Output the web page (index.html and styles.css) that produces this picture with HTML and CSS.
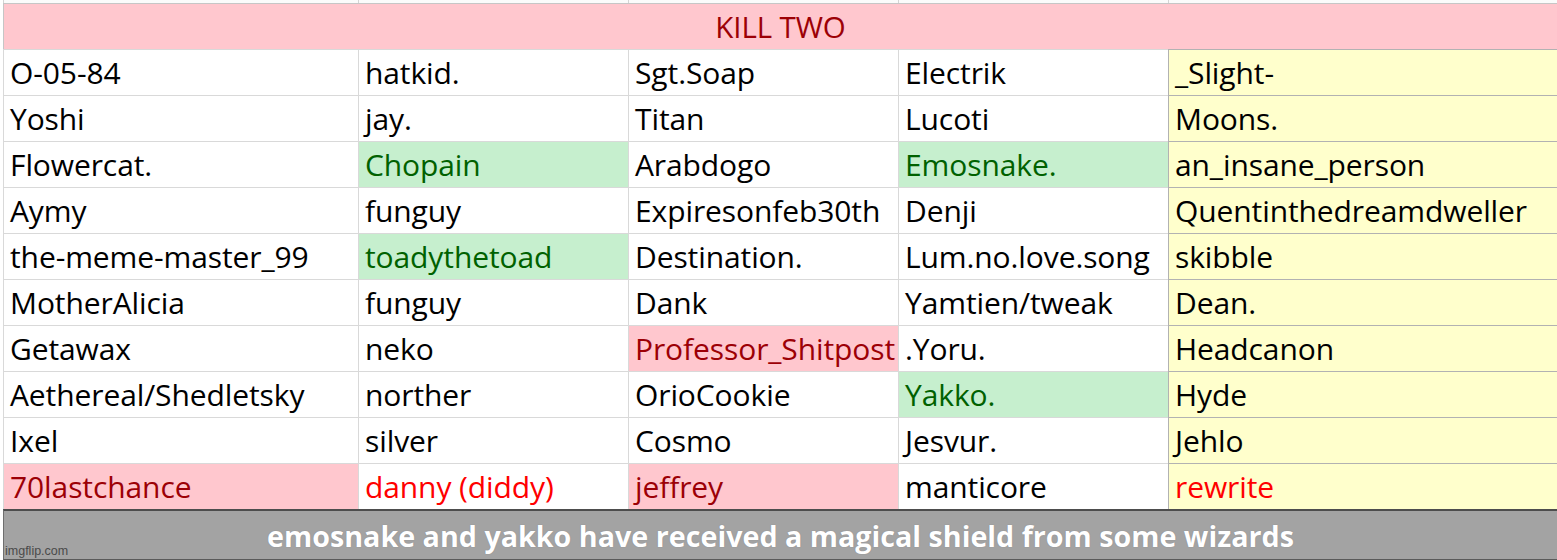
FILE: index.html
```html
<!DOCTYPE html>
<html>
<head>
<meta charset="utf-8">
<link rel="stylesheet" href="styles.css">
</head>
<body>
<div class="sheet">
  <div class="grid">
    <div class="strip"></div><div class="strip"></div><div class="strip"></div><div class="strip"></div><div class="strip"></div>
    <div class="cell head">KILL TWO</div>

    <div class="cell">O-05-84</div><div class="cell">hatkid.</div><div class="cell">Sgt.Soap</div><div class="cell">Electrik</div><div class="cell note">_Slight-</div>
    <div class="cell">Yoshi</div><div class="cell">jay.</div><div class="cell">Titan</div><div class="cell">Lucoti</div><div class="cell note">Moons.</div>
    <div class="cell">Flowercat.</div><div class="cell good">Chopain</div><div class="cell">Arabdogo</div><div class="cell good">Emosnake.</div><div class="cell note">an_insane_person</div>
    <div class="cell">Aymy</div><div class="cell">funguy</div><div class="cell">Expiresonfeb30th</div><div class="cell">Denji</div><div class="cell note">Quentinthedreamdweller</div>
    <div class="cell">the-meme-master_99</div><div class="cell good">toadythetoad</div><div class="cell">Destination.</div><div class="cell">Lum.no.love.song</div><div class="cell note">skibble</div>
    <div class="cell">MotherAlicia</div><div class="cell">funguy</div><div class="cell">Dank</div><div class="cell">Yamtien/tweak</div><div class="cell note">Dean.</div>
    <div class="cell">Getawax</div><div class="cell">neko</div><div class="cell bad">Professor_Shitpost</div><div class="cell">.Yoru.</div><div class="cell note">Headcanon</div>
    <div class="cell">Aethereal/Shedletsky</div><div class="cell">norther</div><div class="cell">OrioCookie</div><div class="cell good">Yakko.</div><div class="cell note">Hyde</div>
    <div class="cell">Ixel</div><div class="cell">silver</div><div class="cell">Cosmo</div><div class="cell">Jesvur.</div><div class="cell note">Jehlo</div>
    <div class="cell bad">70lastchance</div><div class="cell red">danny (diddy)</div><div class="cell bad">jeffrey</div><div class="cell">manticore</div><div class="cell note red">rewrite</div>
  </div>
  <div class="caption">
    <span class="caption-text">emosnake and yakko have received a magical shield from some wizards</span>
    <span class="wm">imgflip.com</span>
  </div>
</div>
</body>
</html>
```
FILE: styles.css
```css
html, body {
  margin: 0;
  padding: 0;
  background: #ffffff;
}
body {
  font-family: "Open Sans", "Noto Sans", sans-serif;
  width: 1557px;
  height: 560px;
  overflow: hidden;
}
.sheet {
  padding-left: 3px;
  width: 1554px;
}
.grid {
  display: grid;
  grid-template-columns: 355px 270px 270px 270px 389px;
  grid-template-rows: 3px;
  grid-auto-rows: 46px;
}
.strip {
  border-left: 1px solid #d4d4d4;
  background: #fbfbfb;
}
.cell {
  border-left: 1px solid #d9d9d9;
  border-top: 1px solid #d9d9d9;
  padding-left: 6px;
  font-size: 30px;
  line-height: 45px;
  letter-spacing: -0.1px;
  color: #000;
  white-space: nowrap;
  overflow: hidden;
}
.head {
  grid-column: 1 / -1;
  background: #ffc7ce;
  color: #9c0006;
  text-align: center;
  padding-left: 0;
  font-size: 29.5px;
  border-top-color: #c6c6c6;
  border-left-color: #c6c6c6;
}
.good {
  background: #c6efce;
  color: #006100;
}
.bad {
  background: #ffc7ce;
  color: #9c0006;
}
.red {
  color: #ff0000;
}
.note {
  background: #ffffcc;
  border-left-color: #b2b2b2;
  border-top-color: #b2b2b2;
}
.caption {
  position: relative;
  height: 48px;
  background: #a3a3a3;
  border-top: 2px solid #4d4d4d;
  border-left: 1px solid #6e6e6e;
  border-bottom: 1px solid #5a5a5a;
  display: flex;
  align-items: center;
  justify-content: center;
}
.caption-text {
  color: #ffffff;
  font-family: "Open Sans", sans-serif;
  font-weight: 700;
  font-size: 28.7px;
  text-shadow: 0 0 1px rgba(60, 60, 80, 0.35);
}
.wm {
  position: absolute;
  left: 1px;
  bottom: 1px;
  font-family: "Liberation Sans", Arial, sans-serif;
  font-size: 12.5px;
  color: #4a4a4a;
}
```
